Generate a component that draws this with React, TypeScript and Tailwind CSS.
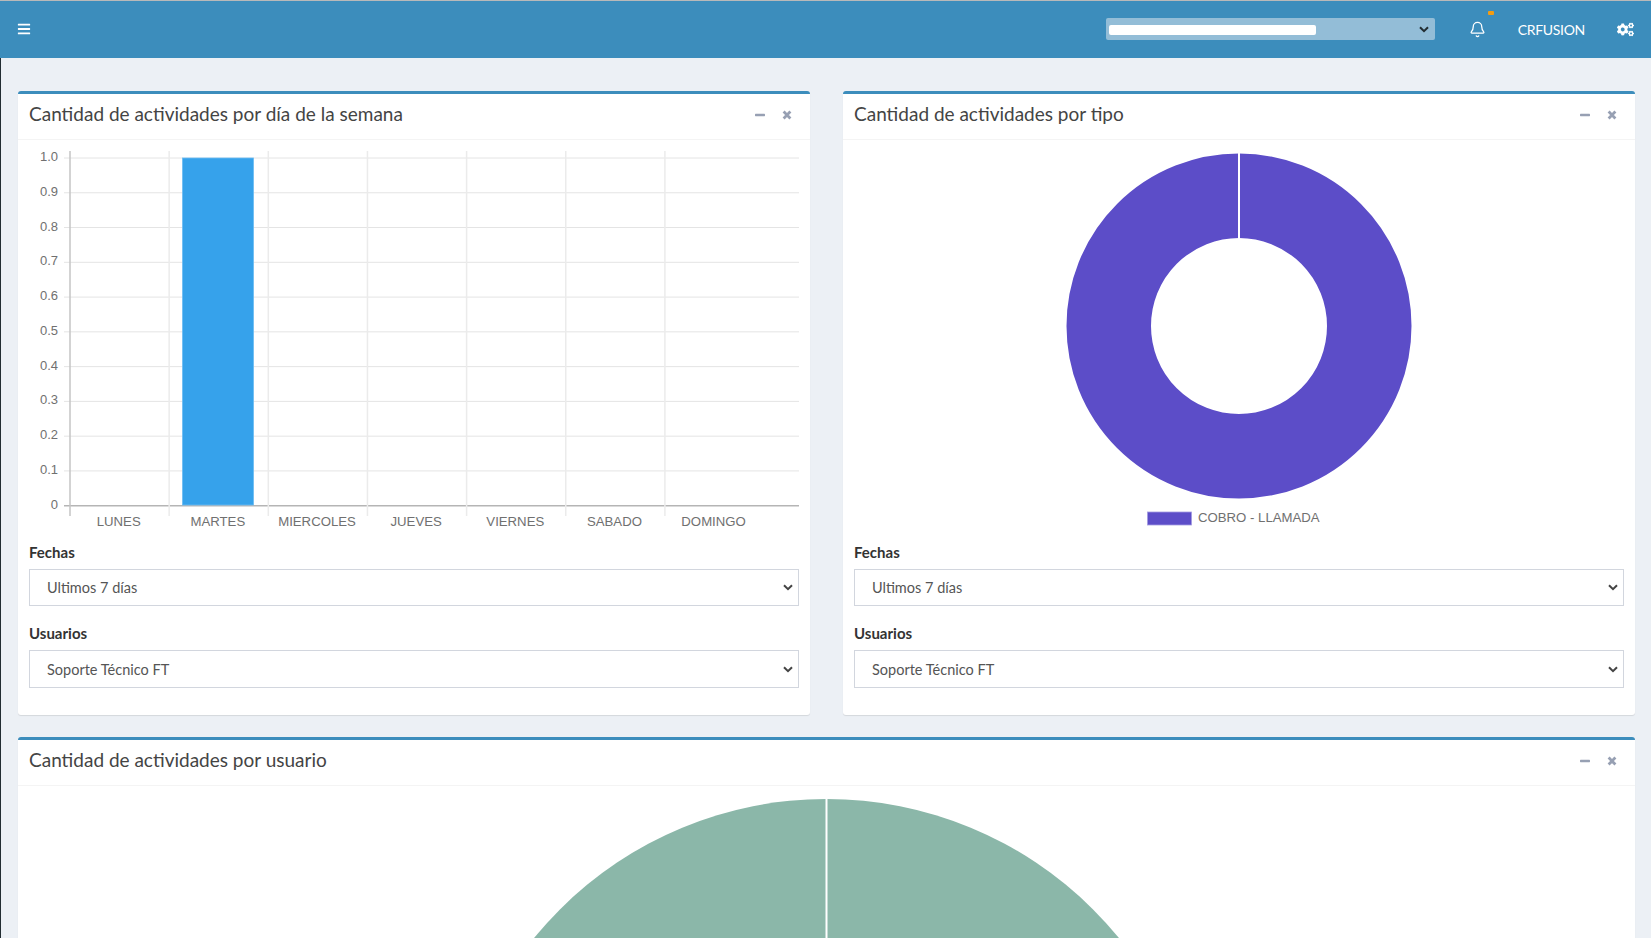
// Dashboard with activity charts: weekday bars, type donut and user pie.
import type { ReactNode } from "react";
import { Bell } from "lucide-react";
import { FaBars, FaCogs } from "react-icons/fa";

const DAYS = ["LUNES", "MARTES", "MIERCOLES", "JUEVES", "VIERNES", "SABADO", "DOMINGO"];
const TICKS = ["1.0", "0.9", "0.8", "0.7", "0.6", "0.5", "0.4", "0.3", "0.2", "0.1", "0"];

const FONT = "font-['Lato','Noto_Sans',sans-serif]";

function Chevron({ className }: { className: string }) {
  return (
    <svg viewBox="0 0 10 7" className={`pointer-events-none absolute h-[7px] w-[10px] ${className}`}>
      <path d="M1 1.2 5 5.2 9 1.2" fill="none" stroke="currentColor" strokeWidth={2} />
    </svg>
  );
}

function Card({ title, children }: { title: string; children: ReactNode }) {
  return (
    <section className="rounded-[3px] border-t-[3px] border-[#3c8dbc] bg-white shadow-[0_1px_1px_rgba(0,0,0,0.1)]">
      <div className="flex h-[46px] items-center justify-between border-b border-[#f4f4f4] pb-[4px] pl-[11px] pr-[18px]">
        <h3 className={`${FONT} text-[19px] text-[#444]`}>{title}</h3>
        <div className="flex items-center gap-[17px] text-[#97a0b3]">
          <svg viewBox="0 0 10 10" className="h-[10px] w-[10px]">
            <rect x={0} y={3.8} width={10} height={2.4} rx={0.6} fill="currentColor" />
          </svg>
          <svg viewBox="0 0 10 10" className="h-[10px] w-[10px]">
            <path d="M1.6 1.6 8.4 8.4M8.4 1.6 1.6 8.4" stroke="currentColor" strokeWidth={2.8} />
          </svg>
        </div>
      </div>
      {children}
    </section>
  );
}

function Field({ label, value, box, arrow }: { label: string; value: string; box: string; arrow: string }) {
  return (
    <div>
      <label className="block h-5 text-[15px] font-bold leading-5 text-[#333]">{label}</label>
      <div className="relative mt-[7px]">
        <select
          aria-label={label}
          className={`block w-full appearance-none border border-[#d2d6de] bg-white pl-[17px] text-[14.5px] text-[#555] ${box}`}
        >
          <option>{value}</option>
        </select>
        <Chevron className={`right-[6px] text-[#444] ${arrow}`} />
      </div>
    </div>
  );
}

function Filters() {
  return (
    <div className={`${FONT} flex flex-col gap-[17px] px-[11px] pb-[27px]`}>
      <Field label="Fechas" value="Ultimos 7 días" box="h-[37px]" arrow="top-[15px]" />
      <Field label="Usuarios" value="Soporte Técnico FT" box="h-[38px] pt-[2px]" arrow="top-4" />
    </div>
  );
}

function BarChart() {
  const xs = DAYS.map((_, i) => 70 + i * 99.15);
  return (
    <svg viewBox="18 140 792 402" className="block h-[402px] w-[792px]">
      {TICKS.map((t, i) => {
        const y = 158 + i * 34.77;
        return (
          <g key={t}>
            <line x1={64} x2={799} y1={y} y2={y} stroke={i === 10 ? "#b5b5b5" : "#e4e4e4"} strokeWidth={i === 10 ? 1.5 : 1} />
            <text x={58} y={y + 3} textAnchor="end" fontFamily="'Liberation Sans', sans-serif" fontSize={13} fill="#707070">
              {t}
            </text>
          </g>
        );
      })}
      {xs.map((x, i) => (
        <g key={x}>
          <line x1={x} x2={x} y1={151} y2={516} stroke={i === 0 ? "#c4c4c4" : "#ebebeb"} strokeWidth={1.5} />
          <text x={x + 48.7} y={526} textAnchor="middle" fontFamily="'Liberation Sans', sans-serif" fontSize={13.2} fill="#707070">
            {DAYS[i]}
          </text>
        </g>
      ))}
      <rect x={182.5} y={158} width={71} height={347} fill="#36a2eb" stroke="#6bbcf3" strokeWidth={0.8} />
    </svg>
  );
}

function DonutChart() {
  return (
    <svg viewBox="843 140 792 402" className="block h-[402px] w-[792px]">
      <circle cx={1239} cy={326} r={130.25} fill="none" stroke="#5c4dc8" strokeWidth={84.5} />
      <line x1={1239} x2={1239} y1={152} y2={238.5} stroke="#fff" strokeWidth={2} />
      <rect x={1147.5} y={512} width={44} height={13} fill="#5c4dc8" stroke="#a49ce0" strokeWidth={0.8} />
      <text x={1198} y={522} fontFamily="'Liberation Sans', sans-serif" fontSize={13.2} fill="#707070">
        COBRO - LLAMADA
      </text>
    </svg>
  );
}

function UserChart() {
  return (
    <svg viewBox="18 786 1617 160" className="block h-[160px] w-[1617px]">
      <circle cx={826.5} cy={1176} r={377} fill="#8bb7a9" />
      <line x1={826.5} x2={826.5} y1={798} y2={946} stroke="#fff" strokeWidth={2} />
    </svg>
  );
}

export default function App() {
  return (
    <div className="h-[938px] w-[1651px] overflow-hidden bg-[#ecf0f5]">
      <header className={`${FONT} flex h-[58px] items-center border-t border-[#b9b9b9] bg-[#3c8dbc] pb-px pl-[17px] pr-[17px] text-white`}>
        <FaBars size={14} />
        <div className="relative ml-auto h-[22px] w-[329px] rounded-[2px] bg-[#93bdd7]">
          <span className="absolute left-[3px] top-[7px] h-[10px] w-[207px] rounded-[2px] bg-white" />
          <Chevron className="right-[6px] top-2 text-[#222d32]" />
        </div>
        <div className="relative ml-[34px]">
          <Bell size={17} strokeWidth={1.8} />
          <span className="absolute -right-[8px] -top-[10px] h-1 w-1.5 rounded-[1px] bg-[#f39c12]" />
        </div>
        <span className="ml-[32px] text-[14px] tracking-[-0.3px]">CRFUSION</span>
        <FaCogs size={17} className="ml-[32px]" />
      </header>
      <main className="border-l border-[#222d32] pl-[17px] pr-[16px] pt-[33px]">
        <div className="grid grid-cols-2 gap-[33px]">
          <Card title="Cantidad de actividades por día de la semana">
            <BarChart />
            <Filters />
          </Card>
          <Card title="Cantidad de actividades por tipo">
            <DonutChart />
            <Filters />
          </Card>
        </div>
        <div className="mt-[22px]">
          <Card title="Cantidad de actividades por usuario">
            <UserChart />
          </Card>
        </div>
      </main>
    </div>
  );
}
